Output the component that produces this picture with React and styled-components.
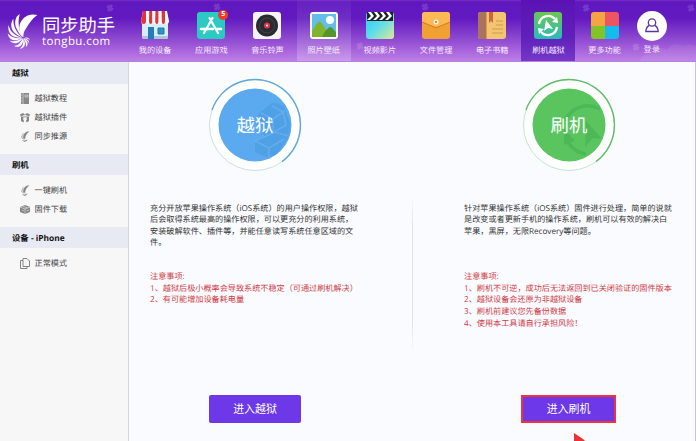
import styled, { createGlobalStyle, css } from "styled-components";

const GlobalStyle = createGlobalStyle`
  * {
    box-sizing: border-box;
  }

  body {
    margin: 0;
    overflow: hidden;
    color: #333;
    font-family: "Open Sans", "Noto Sans CJK SC", sans-serif;
    font-size: 8.15px;
    text-rendering: geometricPrecision;
  }

  svg {
    display: block;
  }
`;

const Window = styled.div`
  display: flex;
  flex-direction: column;
  position: relative;
  width: 696px;
  height: 441px;
  overflow: hidden;
  background: #fafbfe;
`;

const Header = styled.header`
  display: flex;
  flex: none;
  position: relative;
  height: 62px;
  border-bottom: 1px solid #b77fe0;
  background: linear-gradient(
    #7a2cc4 0,
    #5f18bf 2px,
    #6219c0 18px,
    #8743cd 36px,
    #a763dc 50px,
    #bd82e5 62px
  );
  color: #fff;
`;

/* faint flowers and clouds printed over the header gradient */
const HeaderPattern = styled.svg`
  position: absolute;
  inset: 0;
  pointer-events: none;
`;

const Brand = styled.div`
  display: flex;
  flex: none;
  width: 127px;
  padding: 13px 0 0 7px;
`;

const BrandText = styled.div`
  display: flex;
  flex-direction: column;
  margin: 3px 0 0 4px;
  white-space: nowrap;
`;

const BrandName = styled.span`
  font-size: 18.3px;
  line-height: 19px;
`;

const BrandUrl = styled.span`
  margin-top: 1px;
  font-size: 11.5px;
  letter-spacing: 0.4px;
  line-height: 11px;
`;

const NavSlot = styled.div`
  display: flex;
  flex: none;
  justify-content: center;
  width: 56.2px;
`;

const NavTile = styled.div`
  display: flex;
  flex-direction: column;
  align-items: center;
  width: 54px;
  height: 61px;
  padding-top: 11px;
  ${(props) =>
    props.$state === "hover" &&
    css`
      background: linear-gradient(#ffffff08, #ffffff38);
    `}
  ${(props) =>
    props.$state === "active" &&
    css`
      background: linear-gradient(#5b12b5, #5f20ba 60%, #7538c8);
    `}
`;

const LoginItem = styled.div`
  display: flex;
  flex: none;
  flex-direction: column;
  align-items: center;
  width: 38px;
  padding-top: 10.5px;
`;

const NavLabel = styled.span`
  margin-top: ${(props) => (props.$login ? "3.5px" : "5px")};
  color: #f6eafd;
  line-height: 12px;
  white-space: nowrap;
`;

const IconBox = styled.div`
  position: relative;
  width: 28px;
  height: 29px;
`;

const Badge = styled.span`
  position: absolute;
  top: -1px;
  right: -3px;
  width: 10px;
  height: 10px;
  border-radius: 50%;
  background: #ef3b26;
  font-size: 7px;
  font-weight: 700;
  line-height: 10px;
  text-align: center;
`;

const Avatar = styled.div`
  display: flex;
  align-items: center;
  justify-content: center;
  width: 30px;
  height: 30px;
  border-radius: 50%;
  background: #fff;
`;

const Body = styled.div`
  display: flex;
  flex: 1;
  min-height: 0;
`;

const Sidebar = styled.aside`
  flex: none;
  width: 129px;
  border-right: 1px solid #d3d5e0;
  background: #f7f7f8;
`;

const SectionTitle = styled.h2`
  height: 21.5px;
  margin: 0;
  padding-left: 12px;
  background: #e7eaf3;
  color: #111;
  font-size: 8.4px;
  font-weight: 700;
  line-height: 23px;
`;

const SectionList = styled.ul`
  height: ${(props) => props.$height}px;
  margin: 0;
  padding: 6px 0 0 20px;
  list-style: none;
`;

const SectionItem = styled.li`
  display: flex;
  align-items: center;
  gap: 4.5px;
  height: 18.9px;
  color: #444;
`;

const Main = styled.main`
  display: flex;
  flex: 1;
  border-right: 1px solid #c9bdf3;
`;

const Panel = styled.section`
  display: flex;
  flex: none;
  flex-direction: column;
  align-items: center;
  width: 210px;
  padding-top: 16px;
`;

const LeftPanel = styled(Panel)`
  margin-left: 21px;
`;

const RightPanel = styled(Panel)`
  width: 209px;
  margin-left: 51px;
`;

const Divider = styled.div`
  width: 1px;
  height: 156px;
  margin: 134px 0 0 52px;
  background: linear-gradient(#e2e4ee00, #dfe1eb 20%, #dfe1eb 80%, #e2e4ee00);
`;

const Intro = styled.p`
  width: 100%;
  height: 68.5px;
  margin: 30.5px 0 0;
  line-height: 11.55px;
  white-space: pre;
`;

const Notice = styled.div`
  width: 100%;
  height: 124px;
  color: #cf3b46;
  line-height: 11.65px;
  white-space: pre;
`;

const ActionButton = styled.button`
  width: ${(props) => (props.$marked ? "95px" : "92px")};
  height: 28px;
  padding: 0;
  border: ${(props) => (props.$marked ? "2px solid #f0323c" : "0")};
  border-radius: ${(props) => (props.$marked ? "0" : "2px")};
  background: #6c38e8;
  color: #fff;
  font-family: inherit;
  font-size: 10.9px;
  line-height: 24px;
`;

const Pointer = styled.svg`
  position: absolute;
  bottom: 0;
  left: 574px;
`;

function Swirl({ width, height, color }) {
  return (
    <svg width={width} height={height} viewBox="0 0 93 108" fill={color}>
      <path d="M91 6C66-1 40 14 37 42c-1 14 4 24 12 31 0-10 1-17 7-25 8-12 16-28 35-42Z" />
      <path d="M38 3C25 11 20 30 29 47c5 10 11 19 18 26-9-15-11-27-12-39-1-12 1-21 3-31Z" />
      <path d="M19 17C8 32 12 50 25 61c7 6 14 10 21 13-12-11-19-20-23-31-3-9-4-17-4-26Z" />
      <path d="M5 36C1 53 9 67 25 72c8 2 15 3 21 3-15-6-25-11-32-19-5-6-7-12-9-20Z" />
      <path d="M2 60c2 16 14 25 29 21 7-1 12-3 15-5-16 0-25-1-33-6-5-3-8-6-11-10Z" />
      <path d="M7 82c9 11 22 12 32 3 4-3 6-6 8-9-12 6-20 9-28 9-5 0-8-1-12-3Z" />
      <path d="M21 99c11 6 22 1 26-10 2-5 2-9 1-13-5 9-9 15-15 19-4 2-8 3-12 4Z" />
      <path d="M39 107c11-1 17-10 14-21-1-4-2-7-4-9 0 10 0 16-4 23-2 3-4 5-6 7Z" />
      <path d="M56 103c7-6 8-14 1-21-3-3-5-5-8-6 5 8 8 13 8 20 0 3 0 5-1 7Z" />
      <path d="M66 93c2-8-3-15-11-16l-6-1c7 4 12 7 15 11 1 2 2 4 2 6Z" />
      <path d="M69 82c-1-6-8-9-14-8l-6 2c7-1 11 0 15 2 2 1 4 2 5 4Z" />
    </svg>
  );
}

function ShopIcon() {
  return (
    <svg width="28" height="29" viewBox="0 0 28 29">
      <rect x="1" y="8" width="26" height="20" rx="2" fill="#d9edf4" />
      <path d="M1 25h26v1q0 2-2 2H3q-2 0-2-2Z" fill="#adc6d5" />
      <path d="M2 0h24l2 10q0 3-2.8 3T22.4 10q0 3-2.8 3T16.8 10q0 3-2.8 3t-2.8-3q0 3-2.8 3T5.6 10q0 3-2.8 3T0 10Z" fill="#fff" />
      <path d="M2 0h3v10q0 3-2.2 3T0 10ZM8.2 0h3v10q0 3-1.6 3T8 10ZM14.4 0h3v10q0 3-1.6 3t-1.6-3ZM20.6 0H24v10q0 3-1.6 3t-1.6-3Z" fill="#e5333b" />
      <path d="M7 16h6v12H7z" fill="#247db4" />
      <path d="M17 17h6v6h-6z" fill="#2894c9" stroke="#2476a4" />
    </svg>
  );
}

function AppsIcon() {
  return (
    <svg width="28" height="29" viewBox="0 0 28 29">
      <rect y="1" width="28" height="27" rx="3" fill="#2bcac3" />
      <g fill="none" stroke="#fff" strokeWidth="2.2" strokeLinecap="round">
        <path d="M15.5 7 7 22M12.5 7 21 22" />
        <path d="M4 18h12M20 18h4" strokeWidth="2.6" />
      </g>
    </svg>
  );
}

function RecordIcon() {
  return (
    <svg width="28" height="29" viewBox="0 0 28 29">
      <rect y="1" width="28" height="27" rx="3" fill="#f5f5f7" />
      <circle cx="14" cy="14.5" r="11" fill="#292b30" />
      <circle cx="14" cy="14.5" r="7.5" fill="none" stroke="#42444a" />
      <circle cx="14" cy="14.5" r="3" fill="#e5354c" />
      <circle cx="14" cy="14.5" r="1" fill="#fff" />
    </svg>
  );
}

function PhotoIcon() {
  return (
    <svg width="28" height="29" viewBox="0 0 28 29">
      <rect y="1" width="28" height="27" rx="3" fill="#f8faf7" />
      <path d="M2 3h24v23H2z" fill="#63bde9" />
      <path d="M2 20C6 15 7 10 10 11c3 1 4 6 7 9l-2 6H2Z" fill="#80b52b" />
      <path d="M12 26c2-4 5-9 8-10 3 0 4 4 6 5v5Z" fill="#56952a" />
      <circle cx="20" cy="9" r="4" fill="#fff" />
    </svg>
  );
}

function MovieIcon() {
  return (
    <svg width="28" height="29" viewBox="0 0 28 29">
      <defs>
        <linearGradient id="film" x2="1" y2="1">
          <stop stopColor="#26c8f5" />
          <stop offset=".5" stopColor="#5fddea" />
          <stop offset="1" stopColor="#e2e891" />
        </linearGradient>
      </defs>
      <rect y="1" width="28" height="27" rx="3" fill="url(#film)" />
      <path d="M1 1h26v9H1z" fill="#202326" />
      <path d="m2 1 3 4-4 4h3l4-4-3-4Zm6 0 3 4-4 4h3l4-4-3-4Zm6 0 3 4-4 4h3l4-4-3-4Zm6 0 3 4-4 4h3l4-4-3-4Z" fill="#fff" />
    </svg>
  );
}

function FilesIcon() {
  return (
    <svg width="28" height="29" viewBox="0 0 28 29">
      <rect y="1" width="28" height="27" rx="3" fill="#f1a132" />
      <path d="M0 11V4q0-3 3-3h22q3 0 3 3v7l-12 5q-2 1-4 0Z" fill="#ffb954" />
      <path d="m0 11 12 5q2 1 4 0l12-5" fill="none" stroke="#cb7b25" />
      <circle cx="14" cy="11" r="2.5" fill="#fff3d4" />
      <circle cx="14" cy="11" r="1" fill="#a77241" />
    </svg>
  );
}

function BookIcon() {
  return (
    <svg width="28" height="29" viewBox="0 0 28 29">
      <rect y="1" width="28" height="27" rx="3" fill="#f4c56e" />
      <path d="M3 1h5v27H3q-3 0-3-3V4q0-3 3-3Z" fill="#a9735c" />
      <path d="M8 1h1v27H8z" fill="#d79c53" />
      <path d="M11 1h4v11l-2-2-2 2Z" fill="#d5633f" />
      <path d="M18 10h7M18 14h7M14 18h11M14 22h11" stroke="#ce9b50" />
    </svg>
  );
}

function FlashIcon() {
  return (
    <svg width="28" height="29" viewBox="0 0 28 29">
      <defs>
        <linearGradient id="flash" x2="0" y2="1">
          <stop stopColor="#6dc750" />
          <stop offset="1" stopColor="#27bcb9" />
        </linearGradient>
      </defs>
      <rect y="1" width="28" height="27" rx="3" fill="url(#flash)" />
      <path d="M5 13a9.2 9.2 0 0 1 16-5M23 16a9.2 9.2 0 0 1-16 5" fill="none" stroke="#fff" strokeWidth="2.3" />
      <path d="m18 11 6 1-1-6ZM10 18l-6-1 1 6ZM12 9l7 9-5-1-4 3Z" fill="#fff" />
    </svg>
  );
}

function MoreIcon() {
  return (
    <svg width="28" height="29" viewBox="0 0 28 29">
      <path d="M14 1v14H0V4q0-3 3-3Z" fill="#f6a443" />
      <path d="M14 1h11q3 0 3 3v11H14Z" fill="#ed5661" />
      <path d="M0 15h14v13H3q-3 0-3-3Z" fill="#82c425" />
      <path d="M14 15h14v10q0 3-3 3H14Z" fill="#16bbee" />
    </svg>
  );
}

function UserIcon() {
  return (
    <svg width="14" height="15" viewBox="0 0 14 15" fill="none" stroke="#5a35a5" strokeWidth="1.3">
      <circle cx="7" cy="4.5" r="3.7" />
      <path d="M4.4 7.3Q1 9 .8 13.5h12.4Q13 9 9.6 7.3" />
    </svg>
  );
}

function ManualIcon() {
  return (
    <svg width="10" height="11" viewBox="0 0 10 11">
      <path d="M1 0h8v11H1z" fill="#888" />
      <path d="M3 0v11M5 2h3v2H5ZM0 2h2M0 5h2M0 8h2" fill="none" stroke="#ededed" strokeWidth=".6" />
    </svg>
  );
}

function PluginIcon() {
  return (
    <svg width="10" height="11" viewBox="0 0 10 11">
      <path d="m0 2.5 3-1.5 2 1.5L7 1l3 1.5L9 5v4l-2.5 1.5L6 8H4l-.5 2.5L1 9V5Z" fill="#858585" />
      <path d="m1 4.5 4-1.5 4 1.5M3.5 8V5.5h3V8Z" fill="#f7f7f8" stroke="#f7f7f8" strokeWidth=".4" />
    </svg>
  );
}

function FirmwareIcon() {
  return (
    <svg width="10" height="11" viewBox="0 0 10 11">
      <path d="m5 1 5 2v5l-5 2-5-2V3Z" fill="#858585" />
      <path d="m0 3 5 2 5-2M5 5v5M2.5 2l5 2M2 6l2 1M6.5 7 9 6" fill="none" stroke="#eee" strokeWidth=".6" />
    </svg>
  );
}

function CopyIcon() {
  return (
    <svg width="10" height="11" viewBox="0 0 10 11" fill="none" stroke="#858585">
      <path d="M3 .5h4L9.5 3v5.5H3Z" />
      <path d="M3 2.5H.5v8H7v-2" />
    </svg>
  );
}

function SwirlSmall() {
  return (
    <svg width="10" height="11" viewBox="0 0 10 11" fill="#858585">
      <path d="M9.5.5C6 .3 3.7 2.500 3.700 5c0 1.500.5 2.500 1.600 3C5 5 6.500 2.500 9.500.5Z" />
      <path d="M3.500 1.500C1.500 4 2.500 7 5 8.200 3.500 6 3 4 3.500 1.500ZM1.300 4.500C1 7 2.500 8.600 5 8.700 3 7.500 2 6.500 1.300 4.500ZM2 9c1.500 2.300 5 2.300 5.500-.8C6 9.500 4 10 2 9Z" />
    </svg>
  );
}

function JailbreakDial() {
  return (
    <svg width="94" height="94" viewBox="-47 -47 94 94">
      <circle r="45.5" fill="#fff" stroke="#c9dfea" />
      <path d="M-43-15A45.5 45.5 0 1 1 27 36.6" fill="none" stroke="#60a7db" strokeWidth="1.4" />
      <circle r="36.5" fill="#5ba9ee" />
      <path d="m3-11 15-12 11 4 6 18-1 12-12 18-9 4-13-6V16l9-5Z" fill="#489bdf" opacity=".6" />
      <path d="m6-12 12 6 12-8M18-6v13l16 4M17-19l11 6 3 13-15 9-16 7 14 7v11M14 23l15-9" fill="none" stroke="#6bb3f1" strokeWidth="1.6" opacity=".65" />
      <text y="6.5" fill="#fff" fontSize="18.4" textAnchor="middle">越狱</text>
    </svg>
  );
}

function FlashDial() {
  return (
    <svg width="94" height="94" viewBox="-47 -47 94 94">
      <circle r="45.5" fill="#fff" stroke="#c4e5ce" />
      <path d="M-43-15A45.5 45.5 0 1 1 27 36.6" fill="none" stroke="#62bd6b" strokeWidth="1.4" />
      <circle r="36.5" fill="#5ac55f" />
      <path d="M-4-4C3-20 20-22 31-16M-3 12C0 22 7 27 17 29" fill="none" stroke="#4cb858" strokeWidth="3.500" />
      <path d="M-5 3 6 16-5 20ZM17-4l16 18-9-1-8 9Z" fill="#4cb858" />
      <text y="6.5" fill="#fff" fontSize="18.4" textAnchor="middle">刷机</text>
    </svg>
  );
}

const flowers = [
  [110, 8],
  [217, 7],
  [425, 7],
  [586, 8],
  [636, 47],
  [691, 8],
  [360, 46],
];

const navItems = [
  { label: "我的设备", Icon: ShopIcon },
  { label: "应用游戏", Icon: AppsIcon, badge: 5 },
  { label: "音乐铃声", Icon: RecordIcon },
  { label: "照片壁纸", Icon: PhotoIcon, state: "hover" },
  { label: "视频影片", Icon: MovieIcon },
  { label: "文件管理", Icon: FilesIcon },
  { label: "电子书籍", Icon: BookIcon },
  { label: "刷机越狱", Icon: FlashIcon, state: "active" },
  { label: "更多功能", Icon: MoreIcon },
];

const sections = [
  {
    title: "越狱",
    height: 70,
    items: [
      { label: "越狱教程", Icon: ManualIcon },
      { label: "越狱插件", Icon: PluginIcon },
      { label: "同步推源", Icon: SwirlSmall },
    ],
  },
  {
    title: "刷机",
    height: 51.5,
    items: [
      { label: "一键刷机", Icon: SwirlSmall },
      { label: "固件下载", Icon: FirmwareIcon },
    ],
  },
  {
    title: "设备 - iPhone",
    height: 70,
    items: [{ label: "正常模式", Icon: CopyIcon }],
  },
];

const jailbreakIntro = `充分开放苹果操作系统（iOS系统）的用户操作权限，越狱
后会取得系统最高的操作权限，可以更充分的利用系统，
安装破解软件、插件等，并能任意读写系统任意区域的文
件。`;

const jailbreakNotice = `注意事项:
1、越狱后极小概率会导致系统不稳定（可通过刷机解决）
2、有可能增加设备耗电量`;

const flashIntro = `针对苹果操作系统（iOS系统）固件进行处理，简单的说就
是改变或者更新手机的操作系统，刷机可以有效的解决白
苹果，黑屏，无限Recovery等问题。`;

const flashNotice = `注意事项:
1、刷机不可逆，成功后无法返回到已关闭验证的固件版本
2、越狱设备会还原为非越狱设备
3、刷机前建议您先备份数据
4、使用本工具请自行承担风险！`;

const App = () => {
  return (
    <>
      <GlobalStyle />
      <Window>
        <Header>
          <HeaderPattern width="696" height="61" viewBox="0 0 696 61">
            {flowers.map(([x, y]) => (
              <path
                key={x}
                transform={`translate(${x} ${y})`}
                d="M-3.500-1 3.500 1M-1 3.500 1-3.500M-2.500 2.500l5-5M-2-3l4 6"
                stroke="#fff"
                strokeOpacity=".14"
                strokeWidth="1.8"
              />
            ))}
            <path d="M640 61q3-9 12-7 5-10 15-4 6-9 16-4 7-3 13 0v15Z" fill="#fff" opacity=".07" />
          </HeaderPattern>
          <Brand>
            <Swirl width={31} height={36} color="#fff" />
            <BrandText>
              <BrandName>同步助手</BrandName>
              <BrandUrl>tongbu.com</BrandUrl>
            </BrandText>
          </Brand>
          {navItems.map(({ label, Icon, badge, state }) => (
            <NavSlot key={label}>
              <NavTile $state={state}>
                <IconBox>
                  <Icon />
                  {badge && <Badge>{badge}</Badge>}
                </IconBox>
                <NavLabel>{label}</NavLabel>
              </NavTile>
            </NavSlot>
          ))}
          <LoginItem>
            <Avatar>
              <UserIcon />
            </Avatar>
            <NavLabel $login>登录</NavLabel>
          </LoginItem>
        </Header>
        <Body>
          <Sidebar>
            {sections.map(({ title, height, items }) => (
              <div key={title}>
                <SectionTitle>{title}</SectionTitle>
                <SectionList $height={height}>
                  {items.map(({ label, Icon }) => (
                    <SectionItem key={label}>
                      <Icon />
                      {label}
                    </SectionItem>
                  ))}
                </SectionList>
              </div>
            ))}
          </Sidebar>
          <Main>
            <LeftPanel>
              <JailbreakDial />
              <Intro>{jailbreakIntro}</Intro>
              <Notice>{jailbreakNotice}</Notice>
              <ActionButton>进入越狱</ActionButton>
            </LeftPanel>
            <Divider />
            <RightPanel>
              <FlashDial />
              <Intro>{flashIntro}</Intro>
              <Notice>{flashNotice}</Notice>
              <ActionButton $marked>进入刷机</ActionButton>
            </RightPanel>
          </Main>
        </Body>
        <Pointer width="14" height="8" viewBox="0 0 14 8" fill="#ee2f3a">
          <path d="M0 0v8h11L9 6Z" />
        </Pointer>
      </Window>
    </>
  );
};

export default App;
